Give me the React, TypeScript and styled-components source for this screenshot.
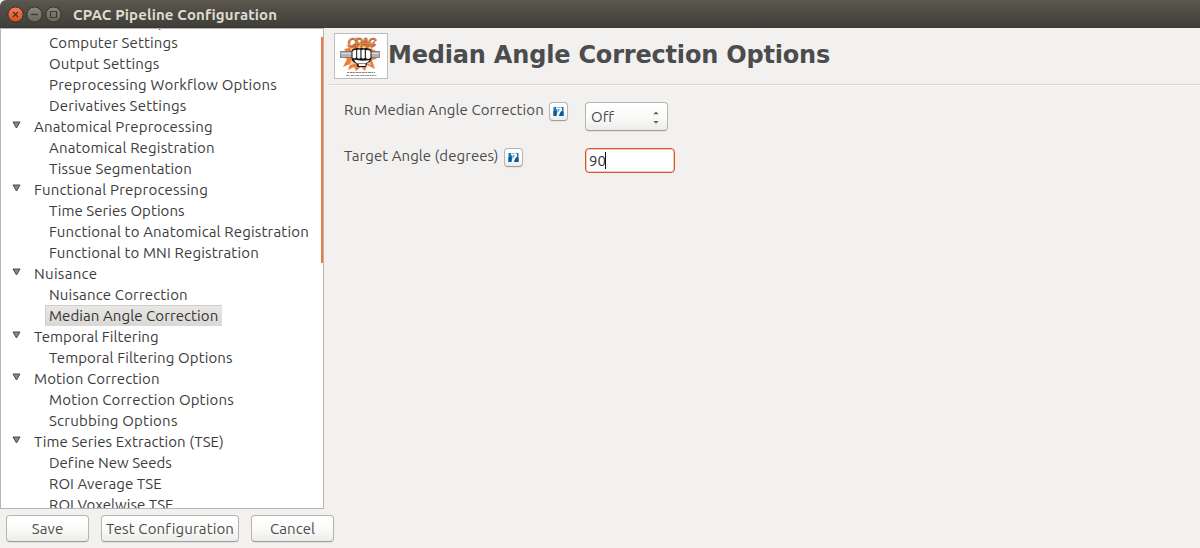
import React from "react";
import styled, { createGlobalStyle } from "styled-components";

const GlobalStyle = createGlobalStyle`
  * { box-sizing: border-box; }
  body { margin: 0; background: #f2f1f0; overflow: hidden; }
`;

const uiFont = `"Ubuntu", "Noto Sans", "Open Sans", sans-serif`;

const Window = styled.div`
  width: 1200px;
  height: 548px;
  display: flex;
  flex-direction: column;
  background: #f2f1f0;
  color: #4c4c4c;
  font: 15px/21px ${uiFont};
  font-variant-ligatures: none;
  overflow: hidden;
  white-space: nowrap;
`;

const TitleBar = styled.header`
  flex: 0 0 28px;
  display: flex;
  align-items: center;
  gap: 3px;
  padding: 0 7px;
  border-radius: 6px 0 0 0;
  background: linear-gradient(#5b5950 0, #57544b 3px, #3f3e39 27px, #33322e 28px);
`;

const WindowTitle = styled.h1<{ $track: number }>`
  margin: 1px 0 0 7px;
  color: #dfdbd2;
  font-size: 15px;
  font-weight: 700;
  line-height: 20px;
  letter-spacing: ${(p) => p.$track}px;
`;

const Body = styled.div`
  display: flex;
  flex: 0 0 481px;
`;

const TreePane = styled.nav`
  position: relative;
  flex: 0 0 324px;
  height: 481px;
  overflow: hidden;
  background: #fff;
  border: 1px solid #b9b5b0;
`;

const TreeList = styled.div`
  margin-top: -18px;
`;

const Row = styled.div<{ $child?: boolean }>`
  display: flex;
  align-items: center;
  height: 21px;
  padding-left: ${(p) => (p.$child ? 44 : 11)}px;
`;

const RowText = styled.span<{ $selected?: boolean; $track: number }>`
  height: 21px;
  padding: 0 4px;
  color: ${(p) => (p.$selected ? "#333" : "#3c3c3c")};
  letter-spacing: ${(p) => p.$track}px;
  background: ${(p) => (p.$selected ? "linear-gradient(#e9e8e6, #d9d8d5)" : "none")};
  box-shadow: ${(p) => (p.$selected ? "inset 1px 1px #cfcecb" : "none")};
`;

const Arrow = styled.svg`
  flex: none;
  width: 9px;
  height: 8px;
  margin: -3px 9px 0 0;
`;

const ScrollThumb = styled.div`
  position: absolute;
  top: 8px;
  right: -1px;
  width: 3px;
  height: 226px;
  background: #f07746;
`;

const Panel = styled.main`
  flex: 1;
  padding: 4px 0 0 5px;
`;

const PanelHeader = styled.div`
  display: flex;
  height: 53px;
  padding: 1px 0 0 5px;
  border-bottom: 1px solid #d9d7d5;
  box-shadow: 0 1px #fafafa;
`;

const PanelTitle = styled.h2`
  margin: 6px 0 0;
  font: 700 24px/32px "DejaVu Sans", sans-serif;
  letter-spacing: -0.19px;
  color: #4c4c4c;
`;

const Form = styled.div`
  display: grid;
  grid-template-columns: 241px auto;
  grid-template-rows: 46px 46px;
  justify-content: start;
  padding: 14px 0 0 15px;
`;

const FieldLabel = styled.div<{ $track: number }>`
  display: flex;
  align-items: flex-start;
  gap: 5px;
  letter-spacing: ${(p) => p.$track}px;
`;

const buttonSurface = `
  border: 1px solid #b8b4b0;
  border-bottom-color: #a09c97;
  border-radius: 4px;
  background: linear-gradient(#fff, #fbfbfa 50%, #ececeb);
  box-shadow: 0 1px 1px rgba(0, 0, 0, 0.06);
  color: #4c4c4c;
  font: 15px/21px ${uiFont};
  font-variant-ligatures: none;
`;

const HelpButton = styled.button`
  ${buttonSurface}
  display: flex;
  align-items: center;
  justify-content: center;
  width: 19px;
  height: 19px;
  margin-top: 3px;
  padding: 0;
`;

const Dropdown = styled.button`
  ${buttonSurface}
  display: flex;
  align-items: center;
  justify-content: space-between;
  width: 83px;
  height: 29px;
  margin-top: 3px;
  padding: 0 7px 0 5px;
`;

const TextField = styled.div`
  display: flex;
  align-items: center;
  width: 90px;
  height: 25px;
  margin-top: 3px;
  padding: 0 3px;
  border: 1px solid #d9562a;
  border-radius: 4px;
  box-shadow: inset 0 0 0 1px #f3c9b8;
  background: #fff;
  color: #333;
`;

const Caret = styled.span`
  width: 1px;
  height: 17px;
  margin-left: -1px;
  background: #111;
`;

const Footer = styled.footer`
  display: flex;
  gap: 12px;
  padding: 6px 0 0 6px;
`;

const ActionButton = styled.button<{ $width: number; $track: number }>`
  ${buttonSurface}
  width: ${(p) => p.$width}px;
  height: 27px;
  padding: 0;
  letter-spacing: ${(p) => p.$track}px;
`;

type Item = { text: string; track: number; child?: boolean; selected?: boolean };

const items: Item[] = [
  { text: "Environment Setup", track: 0.2 },
  { text: "Computer Settings", track: 0.12, child: true },
  { text: "Output Settings", track: 0.16, child: true },
  { text: "Preprocessing Workflow Options", track: 0.21, child: true },
  { text: "Derivatives Settings", track: 0.2, child: true },
  { text: "Anatomical Preprocessing", track: 0.18 },
  { text: "Anatomical Registration", track: 0.17, child: true },
  { text: "Tissue Segmentation", track: 0.12, child: true },
  { text: "Functional Preprocessing", track: 0.21 },
  { text: "Time Series Options", track: 0.06, child: true },
  { text: "Functional to Anatomical Registration", track: 0.17, child: true },
  { text: "Functional to MNI Registration", track: 0.15, child: true },
  { text: "Nuisance", track: 0.3 },
  { text: "Nuisance Correction", track: 0.16, child: true },
  { text: "Median Angle Correction", track: 0.08, child: true, selected: true },
  { text: "Temporal Filtering", track: 0.08 },
  { text: "Temporal Filtering Options", track: 0.12, child: true },
  { text: "Motion Correction", track: 0.12 },
  { text: "Motion Correction Options", track: 0.16, child: true },
  { text: "Scrubbing Options", track: 0.23, child: true },
  { text: "Time Series Extraction (TSE)", track: 0.08 },
  { text: "Define New Seeds", track: 0, child: true },
  { text: "ROI Average TSE", track: 0.06, child: true },
  { text: "ROI Voxelwise TSE", track: 0.06, child: true },
];

function WindowControls() {
  return (
    <svg width="56" height="18" viewBox="0 0 56 18">
      <defs>
        <linearGradient id="close" x1="0" y1="0" x2="0" y2="1">
          <stop offset="0" stopColor="#f58059" />
          <stop offset="1" stopColor="#dd4a1a" />
        </linearGradient>
        <linearGradient id="grey" x1="0" y1="0" x2="0" y2="1">
          <stop offset="0" stopColor="#8b8880" />
          <stop offset="1" stopColor="#66645d" />
        </linearGradient>
      </defs>
      <g stroke="#33322d" strokeWidth="1">
        <circle cx="8.5" cy="9.500" r="7.6" fill="url(#close)" />
        <circle cx="27.5" cy="9.500" r="7.6" fill="url(#grey)" />
        <circle cx="46.5" cy="9.500" r="7.6" fill="url(#grey)" />
      </g>
      <g stroke="#3a3833" strokeWidth="1.2" fill="none">
        <path d="M6 7l5 5M11 7l-5 5" />
        <path d="M24 9.500h7" />
        <path d="M43.500 6.500h6v6h-6z" />
      </g>
    </svg>
  );
}

function Logo() {
  return (
    <svg width="54" height="46" viewBox="0 0 54 46">
      <rect x=".5" y=".5" width="53" height="45" fill="#fff" stroke="#bdbdbd" />
      <path
        d="M12 12l7 2 3-7 5 5 6-6 1 6 8-5-4 9 4 2-4 5 5 3-5 1 3 9-8-4-2 6-4-4-5 4-2-4-6 3 2-6-7 3 4-8-5-3 5-3-3-4 5-1z"
        fill="#e9803c"
      />
      <path d="M16 15l6 1 5-5 6 4 6-4-3 8 3 4-4 3 2 6-6-2-4 4-5-4-7 3 3-7-4-3 4-4z" fill="#f9c893" />
      <path d="M6.500 18.500h39v6h-39z" fill="#b4b4b4" stroke="#6f6f6f" strokeWidth=".8" />
      <path d="M7 20.500h38" stroke="#dcdcdc" />
      <path d="M17.500 18q.5-3 4-2.500 2-1.500 4 0 2-1.500 4.500 0 2.500-1.500 4 0 3-.5 3.500 2.500v7q-.5 4-4.500 5.500l-1 3.500h-8.500l-1-3.500q-5-2-5-5.500z" fill="#161616" />
      <path
        d="M18.500 18.500q.5-2 3.700-1.500v7.500q-1.500 1.500-3.700.2zM23.200 17q1.500-1 3.200 0v8q-1.500 1.200-3.200 0zM27.500 17q2-1 3.300 0v8q-1.500 1.200-3.300 0zM31.900 17.300q3.700-1 4.600 1.200v6q-1.500 2.500-4.600.5zM20 26.500q7 2 15.500.5-1 2.500-4 3.500h-8q-2.500-1-3.500-4zM24.500 31h7v2h-6.500z"
        fill="#fff"
      />
      <g
        fontFamily="Liberation Sans"
        fontSize="12"
        fontWeight="700"
        fontStyle="italic"
        fill="#f28c45"
        stroke="#7d4521"
        strokeWidth=".4"
      >
        <text x="13.500" y="14" textLength="29">CPAC</text>
      </g>
      <path d="M13 39.500h28" stroke="#777" strokeWidth=".9" strokeDasharray="2 .6 3 .5" />
      <path d="M12 42.500h31" stroke="#888" strokeWidth=".9" strokeDasharray="3 .6 1 .5" />
    </svg>
  );
}

function HelpIcon() {
  return (
    <svg width="11" height="11" viewBox="0 0 11 11">
      <path d="M.5 1h2.500v2L4.500 4 3.500 10H.5zM8 1h2.500v9H6l1-3 2-2.500V2.500z" fill="#1b75bb" />
      <path d="M.5 5h3.200l-.5 5H.5zM8 5.500h2.500V10H6z" fill="#075c9f" />
      <path d="M3.200 1h4.500v1H3.200z" fill="#9cc4e2" />
      <path d="M4 3.200h2.800L5 6.200H4.300L5.500 4z" fill="#2a7dbe" />
    </svg>
  );
}

export default function App() {
  return (
    <Window>
      <GlobalStyle />
      <TitleBar>
        <WindowControls />
        <WindowTitle $track={0.13}>CPAC Pipeline Configuration</WindowTitle>
      </TitleBar>
      <Body>
        <TreePane>
          <TreeList>
            {items.map((item) => (
              <Row key={item.text} $child={item.child}>
                {!item.child && (
                  <Arrow viewBox="0 0 9 8">
                    <path d="M1 1h7L4.500 7z" fill="#888" stroke="#4a4a4a" />
                  </Arrow>
                )}
                <RowText $track={item.track} $selected={item.selected}>
                  {item.text}
                </RowText>
              </Row>
            ))}
          </TreeList>
          <ScrollThumb />
        </TreePane>
        <Panel>
          <PanelHeader>
            <Logo />
            <PanelTitle>Median Angle Correction Options</PanelTitle>
          </PanelHeader>
          <Form>
            <FieldLabel $track={0.09}>
              Run Median Angle Correction
              <HelpButton><HelpIcon /></HelpButton>
            </FieldLabel>
            <Dropdown>
              Off
              <svg width="8" height="14" viewBox="0 0 8 14">
                <path d="M1.200 4.200h5.600L4 1.500zM1.200 11h5.600L4 13.700z" fill="#666" />
              </svg>
            </Dropdown>
            <FieldLabel $track={0.05}>
              Target Angle (degrees)
              <HelpButton><HelpIcon /></HelpButton>
            </FieldLabel>
            <TextField>
              90
              <Caret />
            </TextField>
          </Form>
        </Panel>
      </Body>
      <Footer>
        <ActionButton $width={83} $track={0.1}>Save</ActionButton>
        <ActionButton $width={138} $track={0.14}>Test Configuration</ActionButton>
        <ActionButton $width={83} $track={0.1}>Cancel</ActionButton>
      </Footer>
    </Window>
  );
}
